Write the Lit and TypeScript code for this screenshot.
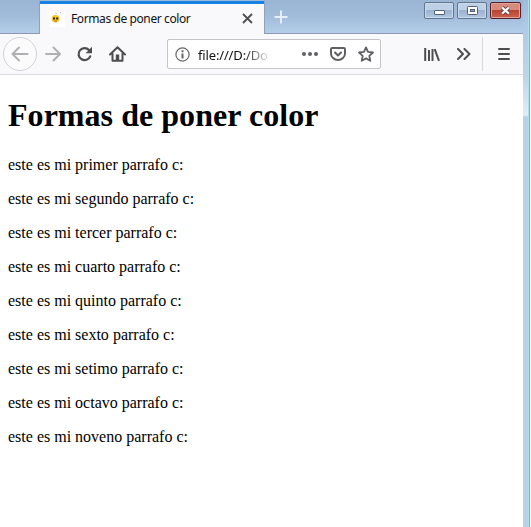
import { LitElement, html, css, svg } from "lit";
import { customElement } from "lit/decorators.js";

const ordinals = ["primer", "segundo", "tercer", "cuarto", "quinto", "sexto", "setimo", "octavo", "noveno"];

const icon = (w: number, h: number, body: unknown) =>
  html`<svg width=${w} height=${h} viewBox="0 0 ${w} ${h}" fill="none" stroke="#4e4e52" stroke-width="2">${body}</svg>`;

const back = svg`<path d="M16.500 8H2M8 1.500L1.500 8l6.500 6.500" stroke="#b0b0b3" stroke-linecap="round" stroke-linejoin="round"/>`;
const forward = svg`<path d="M1 8h14M8.500 1.500L15 8l-6.500 6.500" stroke="#b0b0b3" stroke-linecap="round" stroke-linejoin="round"/>`;
const reload = svg`<path d="M12 4A6 6 0 1 0 13.200 10.300" stroke-width="2.200" stroke-linecap="round"/><path d="M15 .8v6.400H8.600z" fill="#4e4e52" stroke="none"/>`;
const home = svg`<path d="M1 8.500L8.500 1.300L16 8.500M3.500 7.500v7.300h10V7.500" stroke-linecap="round" stroke-linejoin="round"/><path d="M6.800 15V8.500h3.400V15z" fill="#4e4e52" stroke="none"/>`;
const info = svg`<circle cx="7.500" cy="7.500" r="6.600" stroke="#67676a" stroke-width="1.200"/><path d="M7.500 3.200v2M7.500 6.400v5.200" stroke="#67676a"/>`;
const pocket = svg`<path d="M2.300 1h11.400q1.300 0 1.300 1.300V6.500a7 6.500 0 0 1-14 0V2.300Q1 1 2.300 1z" stroke="#606064"/><path d="M5 5.500l3 3 3-3" stroke="#606064" stroke-linecap="round" stroke-linejoin="round"/>`;
const star = svg`<path d="M8 1.400l2 4.500 5 .6-3.700 3.300 1 5L8 12.400l-4.300 2.400 1-5L1 6.500l5-.6z" stroke="#606064" stroke-width="1.800" stroke-linejoin="round"/>`;
const library = svg`<path d="M1.200 0v13M5 2v11M8.500 1v12M10.700 1.200l4.300 11.700"/>`;
const chevrons = svg`<path d="M1 1l5 5-5 5M7.500 1l5 5-5 5" stroke-linecap="round" stroke-linejoin="round"/>`;
const menu = svg`<path d="M1 1h10M1 6h10M1 11h10" stroke-linecap="round"/>`;
const close = svg`<path d="M1 1l9 9M10 1L1 10" stroke-width="1.800"/>`;
const plus = svg`<path d="M7 .5v13M.5 7h13" stroke="#e6f0fa"/>`;
const bee = svg`<circle cx="6.500" cy="7.800" r="3.800" fill="#f6c328" stroke="none"/><path d="M4 7.500h2M7.200 7.500h2" stroke="#352318"/><path d="M5 10h3" stroke="#c46e19" stroke-width="1"/><circle cx="7" cy="2.500" r=".7" fill="#d0c8c0" stroke="none"/><circle cx="11.500" cy="1.500" r=".6" fill="#aaa" stroke="none"/>`;
const minimize = svg`<rect x=".5" y=".5" width="10" height="4" rx=".5" fill="#fff" stroke="#56606f" stroke-width="1"/>`;
const maximize = svg`<rect x=".5" y=".5" width="10" height="8" rx=".8" fill="#fff" stroke="#56606f" stroke-width="1"/><rect x="3.500" y="3.500" width="4" height="2" fill="#8aa6c8" stroke="#56606f" stroke-width="1"/>`;
const cross = svg`<path d="M2.200 1.500l6.600 6M8.800 1.500l-6.600 6" stroke="#5e4750" stroke-width="4"/><path d="M2.200 1.500l6.600 6M8.800 1.500l-6.600 6" stroke="#fff" stroke-width="2.300"/>`;

@customElement("app-root")
export class AppRoot extends LitElement {
  static styles = css`
    :host { display: flex; width: 531px; height: 527px; overflow: hidden; background: #fff; font-family: "Noto Sans", sans-serif; }
    * { box-sizing: border-box; }
    svg { display: block; flex: none; }
    .window { width: 523px; display: flex; flex-direction: column; }
    .tabs { height: 34px; display: flex; padding-left: 39px; background: linear-gradient(#9bb6d5, #a0bbd9 45%, #b4cee9); border-bottom: 1px solid #8a9ab5; }
    .tab { width: 226px; height: 34px; display: flex; align-items: center; padding: 2px 11px 0 9px; background: #f9f9fb; border: solid #8ea2bf; border-width: 0 1px; border-top: 1px solid #a0bbd9; box-shadow: inset 0 3px #1683e2; }
    .favicon { width: 16px; height: 16px; background: #fff; }
    .title { flex: 1; margin-left: 6px; font-size: 12px; letter-spacing: -.4px; color: #111; white-space: nowrap; }
    .new { margin: 10px 0 0 9px; }
    .controls { display: flex; gap: 3px; margin: 2px 2px 0 auto; }
    .control { width: 30px; height: 17px; display: grid; place-items: center; border: 1px solid #64758e; border-radius: 2px; box-shadow: inset 0 0 0 1px #c9daed; background: linear-gradient(#bed0e5 45%, #9bb3d0 50%, #b1c8e2); }
    .exit { width: 31px; border-color: #54212b; box-shadow: inset 0 0 0 1px #e0a398; background: linear-gradient(#d78b7d 45%, #b84432 50%, #cd6350); }
    .minimize { padding-top: 4px; }
    .toolbar { height: 41px; display: flex; align-items: center; background: #f9f9fb; border-bottom: 1px solid #dedee1; }
    .back { width: 34px; height: 34px; margin-left: 3px; display: grid; place-items: center; border: 1px solid #d3d3d6; border-radius: 50%; background: #fbfbfc; }
    .forward { margin-left: 8px; }
    .reload { margin-left: 16px; }
    .home { margin-left: 16px; }
    .address { width: 214px; height: 30px; margin-left: 41px; display: flex; align-items: center; padding: 0 6px 0 7px; background: #fff; border: 1px solid #c4c4c7; border-radius: 2px; }
    .url { width: 71px; margin-left: 8px; white-space: nowrap; font-size: 13px; letter-spacing: -.15px; line-height: 20px; padding-top: 1px; color: transparent; background: linear-gradient(90deg, #111 46px, #11111100 73px); background-clip: text; -webkit-background-clip: text; }
    .dots { display: flex; gap: 2px; margin: 0 12px 0 auto; }
    .dot { width: 4px; height: 4px; border-radius: 50%; background: #606064; }
    .star { margin-left: 12px; }
    .library { margin-left: 43px; }
    .more { margin-left: 17px; }
    .menu { height: 34px; margin-left: 11px; padding-left: 15px; display: flex; align-items: center; border-left: 1px solid #d7d7da; }
    .page { padding: 22px 8px; color: #000; font: 16px/18px "Liberation Serif", serif; }
    h1 { margin: 0 0 22px; font-size: 32px; line-height: 37px; letter-spacing: .04px; }
    p { margin: 0 0 16px; }
    .frame { width: 7px; background: linear-gradient(#a0bbd9, #b2cde9 34px, #bed3e9 75px, #e0edf8 115px, #b7d1eb 117px); border-right: 1px solid #4bc3de; box-shadow: inset -1px 0 #a9e4f3; }
  `;

  render() {
    return html`
      <div class="window">
        <div class="tabs">
          <div class="tab">
            <span class="favicon">${icon(16, 16, bee)}</span>
            <span class="title">Formas de poner color</span>
            ${icon(11, 11, close)}
          </div>
          <span class="new">${icon(14, 14, plus)}</span>
          <div class="controls">
            <span class="control minimize">${icon(11, 5, minimize)}</span>
            <span class="control">${icon(11, 9, maximize)}</span>
            <span class="control exit">${icon(11, 9, cross)}</span>
          </div>
        </div>
        <div class="toolbar">
          <span class="back">${icon(18, 16, back)}</span>
          <span class="forward">${icon(16, 16, forward)}</span>
          <span class="reload">${icon(16, 16, reload)}</span>
          <span class="home">${icon(17, 16, home)}</span>
          <div class="address">
            ${icon(15, 15, info)}
            <span class="url">file:///D:/Do</span>
            <span class="dots"><i class="dot"></i><i class="dot"></i><i class="dot"></i></span>
            ${icon(16, 14, pocket)}
            <span class="star">${icon(16, 16, star)}</span>
          </div>
          <span class="library">${icon(16, 13, library)}</span>
          <span class="more">${icon(14, 12, chevrons)}</span>
          <span class="menu">${icon(12, 12, menu)}</span>
        </div>
        <main class="page">
          <h1>Formas de poner color</h1>
          ${ordinals.map((word) => html`<p>este es mi ${word} parrafo c:</p>`)}
        </main>
      </div>
      <div class="frame"></div>
    `;
  }
}
